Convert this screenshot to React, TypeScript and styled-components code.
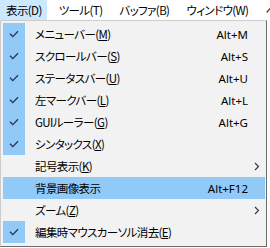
import React from "react";
import styled, { createGlobalStyle } from "styled-components";

const Global = createGlobalStyle`
  html, body { margin: 0; padding: 0; background: #ffffff; }
  body { font-family: "Noto Sans CJK JP", "Noto Sans", sans-serif; }
`;

const Page = styled.div`
  width: 270px;
  height: 248px;
  overflow: hidden;
  background: #ffffff;
`;

const MenuBar = styled.div`
  display: flex;
  gap: 6px;
  height: 20px;
  align-items: stretch;
  background: #ffffff;
  white-space: nowrap;
`;

const BarItem = styled.div<{ $active?: boolean }>`
  display: flex;
  align-items: center;
  padding: 0 5px 0 6px;
  font-size: 11.5px;
  letter-spacing: -0.6px;
  font-feature-settings: "palt";
  color: #000;
  flex-shrink: 0;
  background: ${(p) => (p.$active ? "#cce8ff" : "transparent")};
`;

const Dropdown = styled.div`
  width: 267px;
  height: 227px;
  box-sizing: border-box;
  background: #f2f2f2;
  border: 1px solid #cccccc;
  border-right-color: #6a6a6a;
  border-bottom-color: #6a6a6a;
  padding: 2px 1px 3px 2px;
  display: flex;
  flex-direction: column;
`;

const Row = styled.div<{ $hover?: boolean }>`
  display: grid;
  grid-template-columns: 22px 1fr auto 17px;
  height: 22px;
  align-items: center;
  background: ${(p) => (p.$hover ? "#91c9f7" : "transparent")};
`;

const CheckCell = styled.div<{ $checked?: boolean }>`
  height: 22px;
  display: flex;
  align-items: center;
  justify-content: center;
  background: ${(p) => (p.$checked ? "#91c9f7" : "transparent")};
`;

const Label = styled.div`
  padding-left: 10px;
  font-size: 11.5px;
  letter-spacing: -0.6px;
  font-feature-settings: "palt";
  color: #000;
  white-space: nowrap;
  u { text-underline-offset: 1px; }
`;

const Shortcut = styled.div`
  font-family: "Noto Sans", sans-serif;
  font-size: 11.5px;
  color: #000;
  text-align: right;
  white-space: nowrap;
`;

const Arrow = styled.div`
  display: flex;
  align-items: center;
  justify-content: center;
`;

const Check = () => (
  <svg width="10" height="8" viewBox="0 0 10 8">
    <polyline points="1,3.8 3.8,6.6 9,1.3" fill="none" stroke="#233552" strokeWidth="1.3" />
  </svg>
);

const Chevron = () => (
  <svg width="6" height="9" viewBox="0 0 6 9">
    <polyline points="1,1 4.5,4.5 1,8" fill="none" stroke="#333" strokeWidth="1.1" />
  </svg>
);

type Item = {
  label: string;
  key?: string;
  shortcut?: string;
  checked?: boolean;
  sub?: boolean;
  hover?: boolean;
};

const items: Item[] = [
  { label: "メニューバー", key: "M", shortcut: "Alt+M", checked: true },
  { label: "スクロールバー", key: "S", shortcut: "Alt+S", checked: true },
  { label: "ステータスバー", key: "U", shortcut: "Alt+U", checked: true },
  { label: "左マークバー", key: "L", shortcut: "Alt+L", checked: true },
  { label: "GUIルーラー", key: "G", shortcut: "Alt+G", checked: true },
  { label: "シンタックス", key: "X", checked: true },
  { label: "記号表示", key: "K", sub: true },
  { label: "背景画像表示", shortcut: "Alt+F12", hover: true },
  { label: "ズーム", key: "Z", sub: true },
  { label: "編集時マウスカーソル消去", key: "E", checked: true },
];

export default function App() {
  return (
    <Page>
      <Global />
      <MenuBar>
        <BarItem $active>表示(D)</BarItem>
        <BarItem>ツール(T)</BarItem>
        <BarItem>バッファ(B)</BarItem>
        <BarItem>ウィンドウ(W)</BarItem>
        <BarItem>ヘルプ(H)</BarItem>
      </MenuBar>
      <Dropdown>
        {items.map((it) => (
          <Row key={it.label} $hover={it.hover}>
            <CheckCell $checked={it.checked}>{it.checked && <Check />}</CheckCell>
            <Label>
              {it.label}
              {it.key && (
                <>
                  (<u>{it.key}</u>)
                </>
              )}
            </Label>
            <Shortcut>{it.shortcut}</Shortcut>
            <Arrow>{it.sub && <Chevron />}</Arrow>
          </Row>
        ))}
      </Dropdown>
    </Page>
  );
}
